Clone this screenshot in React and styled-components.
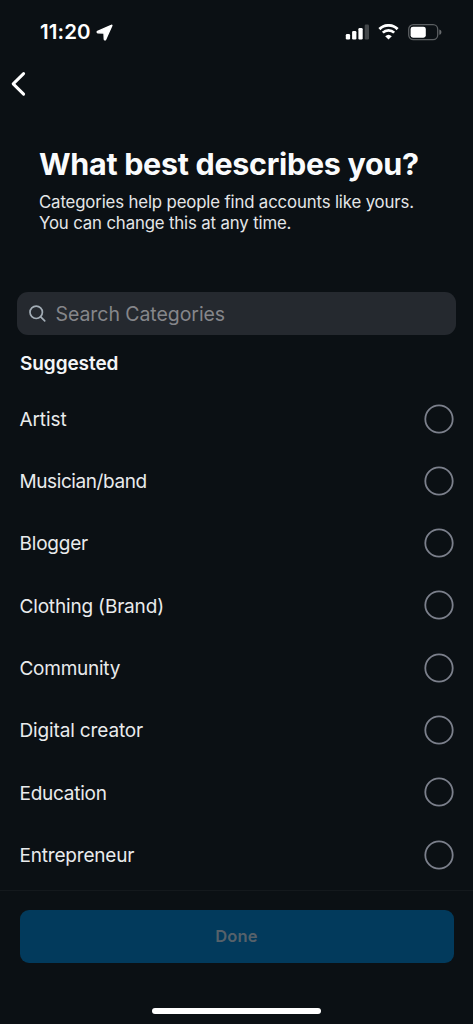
import React, { useState } from "react";
import styled, { createGlobalStyle } from "styled-components";

const GlobalStyle = createGlobalStyle`
  * { box-sizing: border-box; }
  body { margin: 0; background: #0b1014; }
  button, input { font: inherit; letter-spacing: inherit; border: 0; background: none; padding: 0; margin: 0; }
`;

const Screen = styled.div`
  width: 473px;
  height: 1024px;
  display: flex;
  flex-direction: column;
  overflow: hidden;
  background: #0b1014;
  color: #f3f5f7;
  font-family: Inter, "Liberation Sans", sans-serif;
`;

const StatusBar = styled.div`
  height: 64px;
  flex: none;
  display: flex;
  align-items: center;
  justify-content: space-between;
  padding: 0 31px 0 40px;
  color: #fff;
`;

const Clock = styled.div`
  display: flex;
  align-items: center;
  gap: 5px;
  font-size: 20.5px;
  font-weight: 600;
  line-height: 24px;
  letter-spacing: 0.1px;
`;

const Indicators = styled.div`
  display: flex;
  align-items: center;
  gap: 9px;
`;

const NavBar = styled.nav`
  height: 39px;
  flex: none;
  display: flex;
  align-items: center;
  padding-left: 9.5px;
`;

const BackButton = styled.button`
  display: flex;
  color: #fff;
`;

const Header = styled.header`
  height: 189px;
  flex: none;
  padding: 42px 39px 0;
`;

const Title = styled.h1`
  margin: 0;
  font-size: 30.5px;
  font-weight: 700;
  line-height: 38px;
  letter-spacing: -0.31px;
  color: #fafbfc;
  white-space: nowrap;
`;

const Subtitle = styled.p`
  margin: 9px 0 0;
  font-size: 16.8px;
  line-height: 21px;
  letter-spacing: -0.15px;
  color: #e4e6e8;
  white-space: nowrap;
`;

const SearchField = styled.label`
  height: 43px;
  flex: none;
  display: flex;
  align-items: center;
  gap: 10px;
  margin: 0 17px;
  padding: 0 11.5px;
  border-radius: 11px;
  background: #25292f;
  color: #a3adb6;
`;

const SearchInput = styled.input`
  flex: 1;
  min-width: 0;
  outline: none;
  font-size: 19.5px;
  line-height: 24px;
  letter-spacing: -0.06px;
  color: #f3f5f7;
  &::placeholder { color: #85868a; opacity: 1; }
`;

const SectionTitle = styled.h2`
  height: 52.4px;
  flex: none;
  margin: 0;
  padding: 17px 20px 0;
  font-size: 19px;
  font-weight: 600;
  line-height: 24px;
  letter-spacing: -0.08px;
`;

const List = styled.div`
  height: 502.6px;
  flex: none;
  overflow: hidden;
`;

const Row = styled.div`
  height: 62.3px;
  display: flex;
  align-items: center;
  justify-content: space-between;
  padding: 0 19.5px 0 19.5px;
`;

const Label = styled.span`
  padding-top: 2.4px;
  font-size: 19px;
  line-height: 24px;
  color: #e9ebec;
  letter-spacing: ${(p) => p.$tracking}px;
`;

const Radio = styled.svg`
  width: 30px;
  height: 30px;
  fill: ${(p) => (p.$checked ? "#0095f6" : "none")};
  stroke: #7c808c;
  stroke-width: 1.8px;
`;

const Footer = styled.footer`
  flex: 1;
  display: flex;
  flex-direction: column;
  align-items: center;
  padding: 19px 19.5px 0;
  border-top: 1px solid #14191d;
`;

const DoneButton = styled.button`
  && {
    width: 100%;
    height: 53px;
    border-radius: 9px;
    background: #023a5c;
    color: #56616a;
    font-size: 16.5px;
    font-weight: 600;
    letter-spacing: 0.2px;
  }
`;

const HomeBar = styled.div`
  width: 169px;
  height: 6px;
  margin-top: 45px;
  border-radius: 3px;
  background: #fff;
`;

const CATEGORIES = [
  { name: "Artist", tracking: -0.1 },
  { name: "Musician/band", tracking: -0.41 },
  { name: "Blogger", tracking: -0.2 },
  { name: "Clothing (Brand)", tracking: -0.17 },
  { name: "Community", tracking: -0.26 },
  { name: "Digital creator", tracking: -0.14 },
  { name: "Education", tracking: -0.26 },
  { name: "Entrepreneur", tracking: -0.19 },
];

const LocationIcon = () => (
  <svg width="17" height="17" viewBox="0 0 17 17">
    <path d="M15.3 1.3 1.6 7.4c-.6.3-.5 1.2.2 1.3l6.2.4.3 6.1c.1.8 1 .9 1.3.2L15.8 1.8c.2-.4-.1-.7-.5-.5Z" fill="currentColor" stroke="currentColor" strokeWidth="1.4" strokeLinejoin="round" />
  </svg>
);

const SignalIcon = () => (
  <svg width="24" height="16" viewBox="0 0 24 16" fill="currentColor">
    <rect x="0.8" y="10" width="4.3" height="5.5" rx="1.2" />
    <rect x="7.1" y="7" width="4.3" height="8.5" rx="1.2" />
    <rect x="13.4" y="4" width="4.3" height="11.5" rx="1.2" />
    <rect x="19.7" y="0.5" width="4.3" height="15" rx="1.2" opacity="0.23" />
  </svg>
);

const WifiIcon = () => (
  <svg width="21" height="16" viewBox="0 0 21 16" fill="none" stroke="currentColor">
    <path d="M1.4 5.1a13.1 13.1 0 0 1 18.2 0" strokeWidth="2.9" />
    <path d="M4.8 8.6a8.2 8.2 0 0 1 11.4 0" strokeWidth="2.7" />
    <path d="m10.5 15.5-3.3-3.3a4.8 4.8 0 0 1 6.6 0Z" fill="currentColor" stroke="none" />
  </svg>
);

const BatteryIcon = () => (
  <svg width="34" height="17" viewBox="0 0 34 17">
    <rect x="0.7" y="0.7" width="29" height="15" rx="4.6" fill="none" stroke="#5b5f62" strokeWidth="1.3" />
    <path d="M31.3 5.6c1.6.4 2.1 1.5 2.1 2.6s-.5 2.2-2.1 2.6Z" fill="#686b6e" />
    <rect x="2.6" y="2.7" width="15.2" height="11" rx="2.4" fill="#fff" />
  </svg>
);

const BackIcon = () => (
  <svg width="17" height="26" viewBox="0 0 17 26" fill="none" stroke="currentColor" strokeWidth="3" strokeLinecap="round" strokeLinejoin="round">
    <path d="M13.6 2.6 3.2 12.9l10.4 10.2" />
  </svg>
);

const SearchIcon = () => (
  <svg width="17" height="17" viewBox="0 0 17 17" fill="none" stroke="currentColor" strokeWidth="1.7" strokeLinecap="round">
    <circle cx="7.2" cy="7.3" r="6.2" />
    <path d="m11.7 11.8 4 4" />
  </svg>
);

export default function App() {
  const [selected, setSelected] = useState(null);
  return (
    <>
      <GlobalStyle />
      <Screen>
        <StatusBar>
          <Clock>
            11:20
            <LocationIcon />
          </Clock>
          <Indicators>
            <SignalIcon />
            <WifiIcon />
            <BatteryIcon />
          </Indicators>
        </StatusBar>
        <NavBar>
          <BackButton aria-label="Back">
            <BackIcon />
          </BackButton>
        </NavBar>
        <Header>
          <Title>What best describes you?</Title>
          <Subtitle>
            Categories help people find accounts like yours.
            <br />
            You can change this at any time.
          </Subtitle>
        </Header>
        <SearchField>
          <SearchIcon />
          <SearchInput placeholder="Search Categories" />
        </SearchField>
        <SectionTitle>Suggested</SectionTitle>
        <List>
          {CATEGORIES.map(({ name, tracking }) => (
            <Row key={name} onClick={() => setSelected(name)}>
              <Label $tracking={tracking}>{name}</Label>
              <Radio viewBox="0 0 30 30" $checked={selected === name}>
                <circle cx="15" cy="15" r="13.7" />
              </Radio>
            </Row>
          ))}
        </List>
        <Footer>
          <DoneButton>Done</DoneButton>
          <HomeBar />
        </Footer>
      </Screen>
    </>
  );
}
